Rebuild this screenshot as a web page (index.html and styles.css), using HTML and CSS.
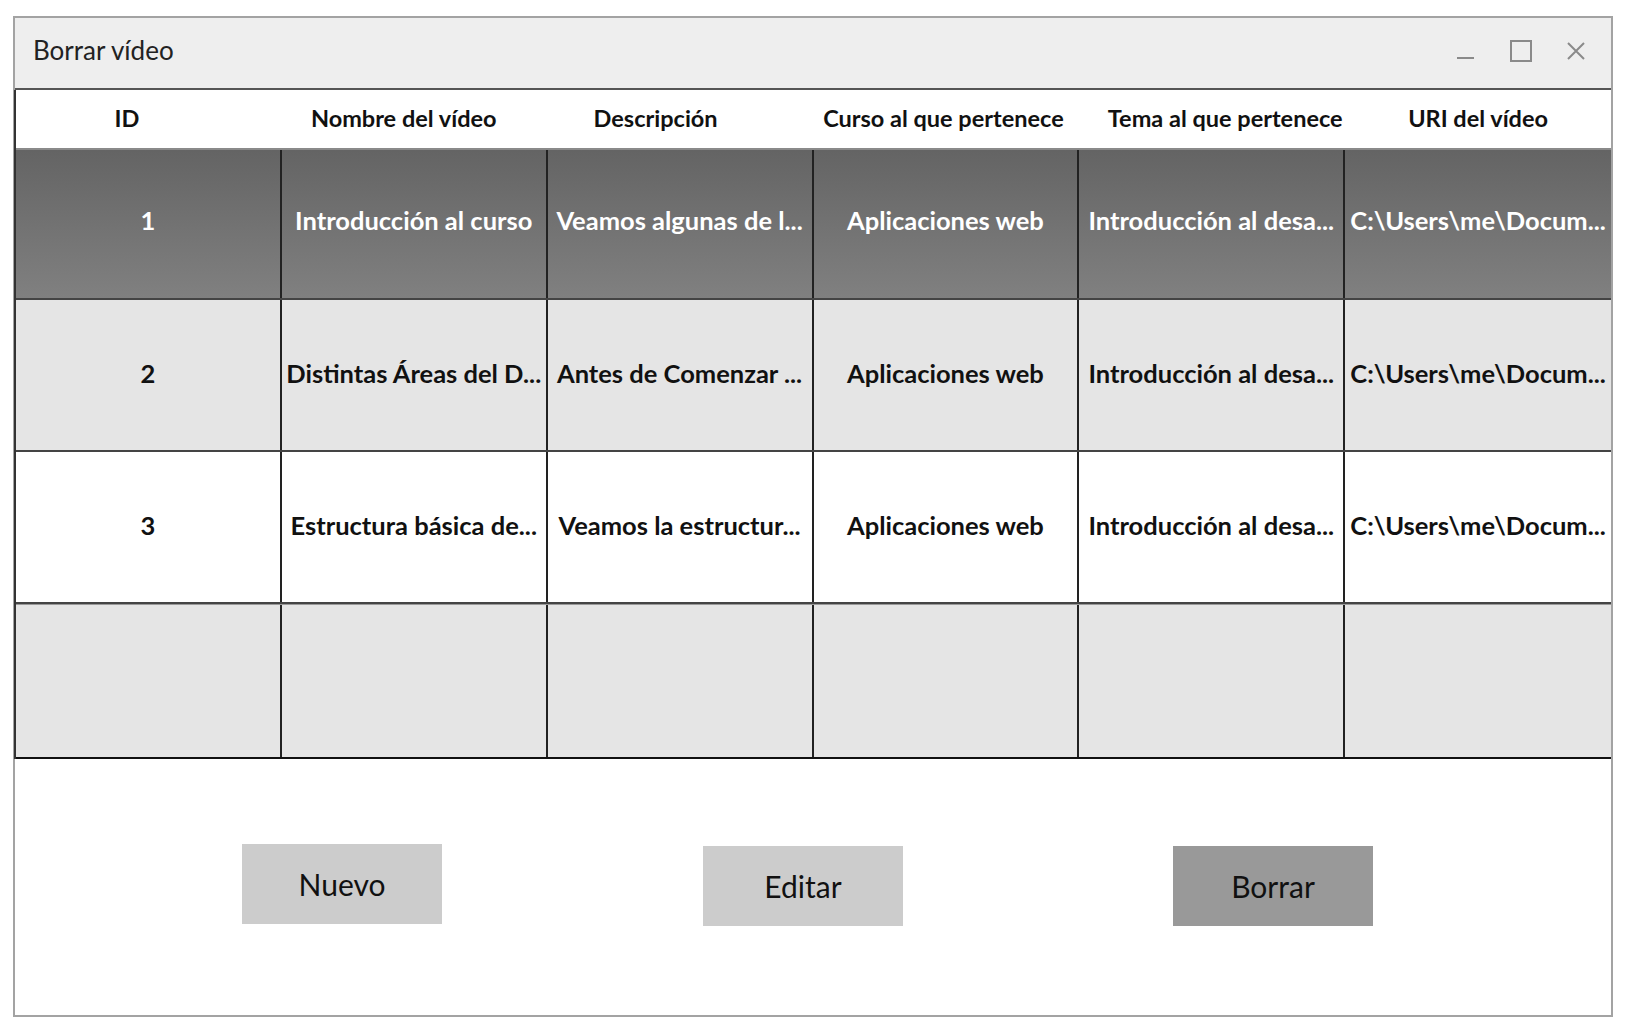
FILE: index.html
```html
<!DOCTYPE html>
<html lang="es">
<head>
  <meta charset="UTF-8" />
  <meta name="viewport" content="width=device-width, initial-scale=1.0" />
  <title>Borrar vídeo</title>
  <link rel="stylesheet" href="styles.css">
</head>
<body>
  <div class="window">
    <div class="titlebar">
      <span class="title">Borrar vídeo</span>
      <div class="controls">
        <svg class="ctrl" width="24" height="24" viewBox="0 0 24 24"><line x1="3" y1="19" x2="20" y2="19" stroke="#8a8a8a" stroke-width="2"/></svg>
        <svg class="ctrl" width="24" height="24" viewBox="0 0 24 24"><rect x="2" y="2" width="20" height="20" fill="none" stroke="#8a8a8a" stroke-width="2"/></svg>
        <svg class="ctrl" width="24" height="24" viewBox="0 0 24 24"><path d="M4 4 L20 20 M20 4 L4 20" stroke="#8a8a8a" stroke-width="2" fill="none"/></svg>
      </div>
    </div>

    <div class="table">
      <div class="head">
        <span>ID</span>
        <span>Nombre del vídeo</span>
        <span>Descripción</span>
        <span>Curso al que pertenece</span>
        <span>Tema al que pertenece</span>
        <span>URI del vídeo</span>
      </div>

      <div class="row selected">
        <div class="cell">1</div>
        <div class="cell">Introducción al curso</div>
        <div class="cell">Veamos algunas de l...</div>
        <div class="cell">Aplicaciones web</div>
        <div class="cell">Introducción al desa...</div>
        <div class="cell">C:\Users\me\Docum...</div>
      </div>
      <div class="row alt">
        <div class="cell">2</div>
        <div class="cell">Distintas Áreas del D...</div>
        <div class="cell">Antes de Comenzar ...</div>
        <div class="cell">Aplicaciones web</div>
        <div class="cell">Introducción al desa...</div>
        <div class="cell">C:\Users\me\Docum...</div>
      </div>
      <div class="row">
        <div class="cell">3</div>
        <div class="cell">Estructura básica de...</div>
        <div class="cell">Veamos la estructur...</div>
        <div class="cell">Aplicaciones web</div>
        <div class="cell">Introducción al desa...</div>
        <div class="cell">C:\Users\me\Docum...</div>
      </div>
      <div class="row alt empty">
        <div class="cell"></div>
        <div class="cell"></div>
        <div class="cell"></div>
        <div class="cell"></div>
        <div class="cell"></div>
        <div class="cell"></div>
      </div>
    </div>

    <div class="actions">
      <button class="btn btn-new">Nuevo</button>
      <button class="btn">Editar</button>
      <button class="btn btn-delete">Borrar</button>
    </div>
  </div>
</body>
</html>
```

FILE: styles.css
```css
* {
  margin: 0;
  padding: 0;
  box-sizing: border-box;
  font-family: 'Lato', 'Noto Sans', sans-serif;
}

body {
  background: #ffffff;
  color: #111;
}

.window {
  margin: 16px 0 0 13px;
  width: 1600px;
  height: 1001px;
  border: 2px solid #a3a3a3;
  display: flex;
  flex-direction: column;
}

.titlebar {
  height: 72px;
  background: #eeeeee;
  border-bottom: 2px solid #555;
  display: flex;
  align-items: center;
  justify-content: space-between;
  padding: 0 23px 6px 18px;
}

.title {
  font-size: 26px;
  color: #222;
}

.controls {
  display: flex;
  gap: 31px;
  align-items: center;
  margin-top: 2px;
}

.table {
  margin-left: -1px;
  border-left: 2px solid #333;
}

.head {
  display: grid;
  grid-template-columns: repeat(6, 1fr);
  height: 60px;
  align-items: center;
  border-bottom: 2px solid #8a8a8a;
  font-weight: 700;
  font-size: 23.5px;
  text-align: center;
  padding-bottom: 2px;
}

.head span { white-space: nowrap; }
.head span:nth-child(1) { padding-right: 44px; }
.head span:nth-child(2) { padding-right: 22px; }
.head span:nth-child(3) { padding-right: 50px; }
.head span:nth-child(4) { padding-right: 6px; }
.head span:nth-child(5) { padding-left: 26px; }

.row {
  display: grid;
  grid-template-columns: repeat(6, 1fr);
  height: 152px;
  background: #ffffff;
  border-bottom: 2px solid #444;
}

.row.alt {
  background: #e5e5e5;
}

.row.selected {
  background: linear-gradient(180deg, #646464, #808080);
  color: #ffffff;
  height: 150px;
}

.row.selected .cell {
  padding-bottom: 8px;
}

.row.empty {
  height: 155px;
  border-top: 1px solid #999;
  border-bottom-color: #111;
}

.cell {
  display: flex;
  align-items: center;
  justify-content: center;
  padding: 0 4px 4px;
  font-weight: 700;
  font-size: 25.5px;
  white-space: nowrap;
  overflow: hidden;
  border-right: 2px solid #222;
}

.cell:last-child {
  border-right: none;
}

.actions {
  flex: 1;
  display: flex;
  align-items: center;
  padding: 0 0 2px 227px;
}

.btn {
  width: 200px;
  height: 80px;
  border: none;
  background: #cccccc;
  font-size: 30px;
  color: #111;
  font-family: 'Lato', 'Noto Sans', sans-serif;
}

.btn + .btn {
  margin-left: 261px;
}

.btn-new {
  margin-top: -4px;
}

.btn-delete {
  background: #999999;
  margin-left: 270px !important;
}
```
